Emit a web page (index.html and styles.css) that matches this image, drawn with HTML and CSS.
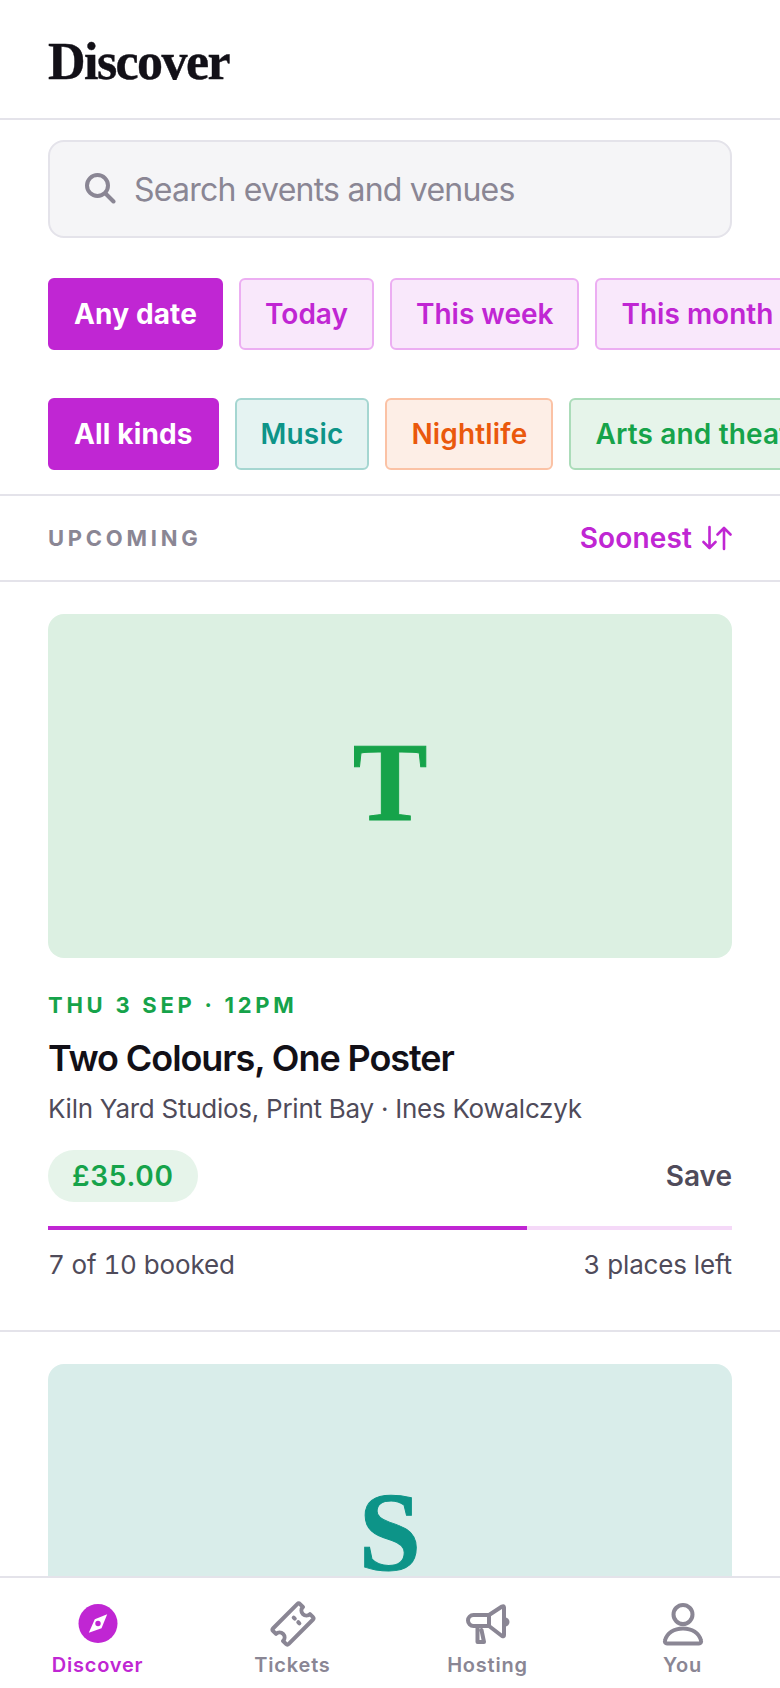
FILE: index.html
```html
<!DOCTYPE html>
<html lang="en">

<head>
    <meta charset="utf-8">
    <meta name="viewport" content="width=device-width, initial-scale=1.0">
    <title>Discover</title>
    <link rel="stylesheet" href="styles.css">
</head>

<body>
    <div class="app">
        <header class="topbar">
            <h1>Discover</h1>
        </header>

        <main class="content">
            <section class="filters">
                <div class="search">
                    <svg class="search-icon" viewBox="0 0 32 32" fill="none" stroke="currentColor" stroke-width="4" stroke-linecap="round">
                        <circle cx="13.5" cy="12.5" r="10.5" />
                        <path d="M21.5 20.5 29.5 28.5" />
                    </svg>
                    <span>Search events and venues</span>
                </div>
                <div class="chips chips-date">
                    <button class="chip active">Any date</button>
                    <button class="chip">Today</button>
                    <button class="chip">This week</button>
                    <button class="chip">This month</button>
                </div>
                <div class="chips chips-kind">
                    <button class="chip active">All kinds</button>
                    <button class="chip teal">Music</button>
                    <button class="chip orange">Nightlife</button>
                    <button class="chip green">Arts and theatre</button>
                </div>
            </section>

            <div class="list-head">
                <span class="list-label">UPCOMING</span>
                <button class="sort">Soonest
                    <svg viewBox="0 0 30 28" fill="none" stroke="currentColor" stroke-width="2.6" stroke-linecap="round" stroke-linejoin="round">
                        <path d="M7.500 3V24M1.500 18 7.500 24 13.500 18" />
                        <path d="M22 25V4M15.500 10.500 22 4 28.500 10.500" />
                    </svg>
                </button>
            </div>

            <article class="event">
                <div class="poster poster-green">T</div>
                <p class="when when-green">THU 3 SEP · 12PM</p>
                <h2>Two Colours, One Poster</h2>
                <p class="where">Kiln Yard Studios, Print Bay · Ines Kowalczyk</p>
                <div class="price-row">
                    <span class="price">£35.00</span>
                    <button class="save">Save</button>
                </div>
                <div class="bar"><div class="bar-fill" style="width: 70%"></div></div>
                <div class="stats">
                    <span>7 of 10 booked</span>
                    <span>3 places left</span>
                </div>
            </article>

            <article class="event">
                <div class="poster poster-teal">S</div>
            </article>
        </main>

        <nav class="tabs">
            <a class="tab current">
                <svg viewBox="0 0 48 48">
                    <circle cx="24" cy="23.500" r="19.500" fill="currentColor" />
                    <path d="M33.200 14.300 27.500 28.300 14.800 32.700 20.800 19.300Z" fill="#fff" />
                    <circle cx="24" cy="23.500" r="2.700" fill="currentColor" />
                </svg>
                Discover
            </a>
            <a class="tab">
                <svg viewBox="0 0 48 48" fill="none" stroke="currentColor" stroke-width="4" stroke-linejoin="round" stroke-linecap="round">
                    <g transform="rotate(-45 24 24)">
                        <path d="M7 13H41a2 2 0 0 1 2 2v4a5 5 0 0 0 0 10v4a2 2 0 0 1-2 2H7a2 2 0 0 1-2-2v-4a5 5 0 0 0 0-10v-4a2 2 0 0 1 2-2Z" />
                        <path d="M29 20v1.500M29 26.500v1.500" />
                    </g>
                </svg>
                Tickets
            </a>
            <a class="tab">
                <svg viewBox="0 0 48 48" fill="none" stroke="currentColor" stroke-width="4" stroke-linejoin="round" stroke-linecap="round">
                    <path d="M25 15H9.500a5.500 5.500 0 0 0 0 11H25Z" />
                    <path d="M25 15 38 6.500Q40 5.500 40 7.500V35Q40 37 38 36L25 26" />
                    <path d="M13.500 26V42H20L17.500 30" />
                    <path d="M41 19.500a2.500 2.500 0 0 1 0 5" />
                </svg>
                Hosting
            </a>
            <a class="tab">
                <svg viewBox="0 0 48 48" fill="none" stroke="currentColor" stroke-width="4" stroke-linejoin="round">
                    <circle cx="24" cy="14.500" r="9.500" />
                    <path d="M8 43.500c-1.500 0-2.500-1.500-2-3C8 33 15 28.500 24 28.500S40 33 42 40.500c.5 1.500-.5 3-2 3Z" />
                </svg>
                You
            </a>
        </nav>
    </div>
</body>

</html>
```

FILE: styles.css
```css
* {
    box-sizing: border-box;
}

body {
    margin: 0;
    background: #fff;
    color: #121017;
    font-family: Inter, "Noto Sans", sans-serif;
}

button {
    font-family: inherit;
}

.app {
    display: flex;
    flex-direction: column;
    height: 1688px;
    overflow: hidden;
}

.topbar {
    flex: none;
    height: 120px;
    padding: 6px 48px 0;
    border-bottom: 2px solid #e4e3ea;
    display: flex;
    align-items: center;
}

h1 {
    margin: 0;
    font-family: "Liberation Serif", serif;
    font-size: 52px;
    line-height: 1;
    letter-spacing: -0.03em;
    font-weight: 700;
    -webkit-text-stroke: 0.4px #121017;
}

.content {
    flex: 1;
    min-height: 0;
    overflow: hidden;
}

/* search and chips */
.filters {
    padding: 20px 0 24px;
    border-bottom: 2px solid #e4e3ea;
}

.search {
    height: 98px;
    margin: 0 48px;
    padding: 0 34px;
    display: flex;
    align-items: center;
    gap: 18px;
    background: #f5f5f7;
    border: 2px solid #e4e3ea;
    border-radius: 16px;
    color: #8a8694;
    font-size: 32px;
    letter-spacing: -0.024em;
}

.search-icon {
    width: 32px;
    height: 32px;
    flex: none;
}

.chips {
    display: flex;
    gap: 16px;
    padding-left: 48px;
    overflow: hidden;
}

.chips-date {
    margin-top: 40px;
}

.chips-kind {
    margin-top: 48px;
    letter-spacing: 0.01em;
}

.chip {
    flex: none;
    height: 72px;
    padding: 0 24px;
    border: 2px solid #ecaef2;
    border-radius: 6px;
    background: #f9e8fb;
    color: #c026d3;
    font-size: 28px;
    font-weight: 600;
    letter-spacing: inherit;
}

.chip.active {
    background: #c026d3;
    border-color: #c026d3;
    color: #fff;
    font-weight: 700;
    letter-spacing: 0.005em;
}

.chip.teal {
    background: #e5f3f2;
    border-color: #a5d6d1;
    color: #0d9488;
}

.chip.orange {
    background: #fdeee6;
    border-color: #fbc2a5;
    color: #ea580c;
}

.chip.green {
    background: #e6f4ea;
    border-color: #abdcb9;
    color: #16a34a;
}

/* list header */
.list-head {
    height: 86px;
    padding: 0 48px;
    display: flex;
    align-items: center;
    justify-content: space-between;
    border-bottom: 2px solid #e4e3ea;
}

.list-label {
    color: #8a8694;
    font-size: 22px;
    font-weight: 700;
    letter-spacing: 0.17em;
}

.sort {
    display: flex;
    align-items: center;
    gap: 10px;
    padding: 0;
    border: 0;
    background: none;
    color: #c026d3;
    font-size: 28px;
    font-weight: 600;
    letter-spacing: 0.005em;
}

.sort svg {
    width: 30px;
    height: 28px;
}

/* event card */
.event {
    padding: 32px 48px 48px;
    border-bottom: 2px solid #e4e3ea;
}

.poster {
    height: 344px;
    padding-bottom: 8px;
    border-radius: 16px;
    display: flex;
    align-items: center;
    justify-content: center;
    font-family: "Liberation Serif", serif;
    font-size: 112px;
    font-weight: 700;
    -webkit-text-stroke: 1px currentColor;
}

.poster-green {
    background: #dcf0e2;
    color: #16a34a;
}

.poster-teal {
    background: #d9edea;
    color: #0d9488;
}

.when {
    margin: 33px 0 0;
    font-size: 22px;
    line-height: 28px;
    font-weight: 700;
    letter-spacing: 0.17em;
}

.when-green {
    color: #16a34a;
}

h2 {
    margin: 17px 0 0;
    font-size: 36px;
    line-height: 44px;
    font-weight: 600;
    letter-spacing: -0.03em;
}

.where {
    margin: 12px 0 0;
    font-size: 26px;
    line-height: 34px;
    letter-spacing: -0.01em;
    color: #4f4b5a;
}

.price-row {
    margin-top: 24px;
    display: flex;
    align-items: center;
    justify-content: space-between;
}

.price {
    height: 52px;
    padding: 0 24px;
    display: flex;
    align-items: center;
    border-radius: 26px;
    background: #e6f4ea;
    color: #16a34a;
    font-size: 28px;
    font-weight: 600;
    letter-spacing: 0.025em;
}

.save {
    padding: 0;
    border: 0;
    background: none;
    color: #4f4b5a;
    font-size: 28px;
    font-weight: 600;
}

.bar {
    height: 4px;
    margin-top: 24px;
    background: #f5d9f8;
}

.bar-fill {
    height: 100%;
    background: #c026d3;
}

.stats {
    margin-top: 18px;
    display: flex;
    justify-content: space-between;
    font-size: 26px;
    line-height: 34px;
    color: #4f4b5a;
    font-variant-numeric: tabular-nums;
    letter-spacing: -0.005em;
}

/* bottom tabs */
.tabs {
    flex: none;
    height: 112px;
    display: grid;
    grid-template-columns: repeat(4, 1fr);
    background: #fff;
    border-top: 2px solid #e4e3ea;
}

.tab {
    display: flex;
    flex-direction: column;
    align-items: center;
    padding-top: 22px;
    color: #8a8694;
    font-size: 20px;
    line-height: 26px;
    font-weight: 600;
    letter-spacing: 0.04em;
}

.tab svg {
    width: 48px;
    height: 48px;
    margin-bottom: 4px;
}

.tab.current {
    color: #c026d3;
}
```
